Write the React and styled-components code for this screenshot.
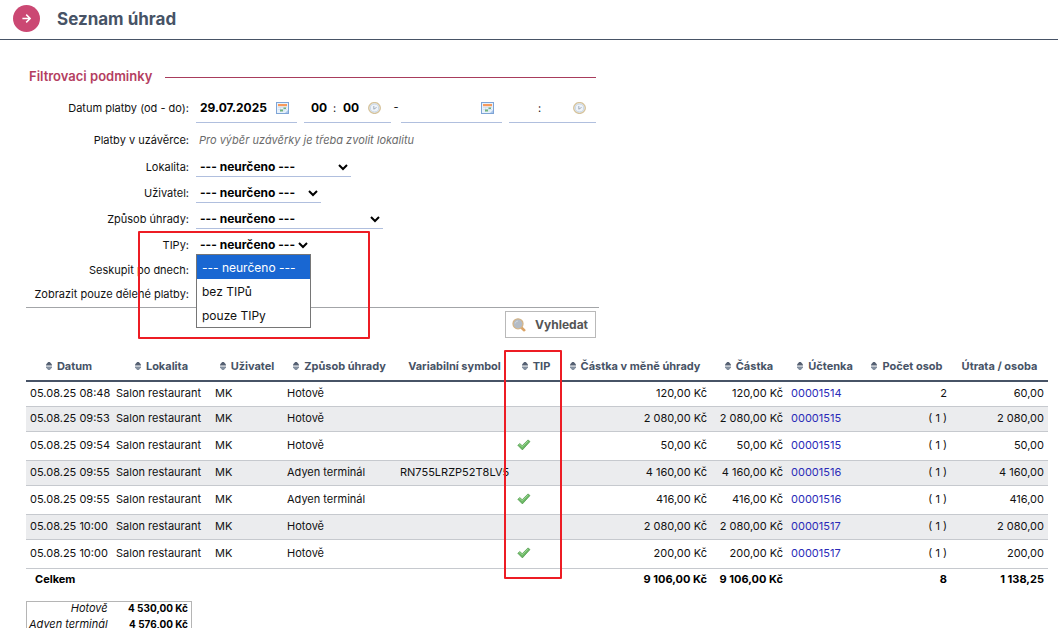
import React from "react";
import styled, { createGlobalStyle, css } from "styled-components";

const GlobalStyle = createGlobalStyle`
  *, *::before, *::after { box-sizing: border-box; }
  html { scrollbar-width: none; }
  body {
    margin: 0;
    background: #fff;
    color: #111;
    font: 400 11px/16px Inter, "Liberation Sans", sans-serif;
  }
  input, select, button { font-family: inherit; }
`;

const Header = styled.header`
  display: flex;
  align-items: center;
  gap: 17px;
  height: 40px;
  padding: 0 13px 2px;
  border-bottom: 1px solid #475366;
`;

const BackButton = styled.button`
  display: grid;
  place-items: center;
  width: 27px;
  height: 27px;
  padding: 0;
  border: 0;
  border-radius: 50%;
  background: #cb4873;
`;

const Title = styled.h1`
  margin: 0;
  color: #475366;
  font-size: 17px;
  line-height: 24px;
  font-weight: 700;
`;

const Main = styled.main`
  padding: 26px 10px 0 26px;
`;

const Filter = styled.form`
  position: relative;
  max-width: 573px;
`;

const FilterTitle = styled.h2`
  display: flex;
  align-items: center;
  gap: 13px;
  height: 20px;
  margin: 0 3px 7px;
  color: #b43e61;
  font-size: 13px;
  line-height: 18px;
  font-weight: 600;
  white-space: nowrap;

  &::after {
    content: "";
    flex: 1;
    height: 1px;
    margin-top: 2px;
    background: #a83c5c;
  }
`;

const Rows = styled.div`
  display: flex;
  flex-direction: column;
  gap: 6px;
  padding-bottom: 4px;
  border-bottom: 1px solid #a3a5a8;
`;

const Row = styled.div`
  display: grid;
  grid-template-columns: 163px 1fr;
  column-gap: 7px;
  align-items: center;
  height: ${(p) => p.$h || 20}px;
`;

const Label = styled.label`
  text-align: right;
  white-space: nowrap;
`;

const Hint = styled.em`
  padding-left: 3px;
  color: #6b6b6b;
`;

const DateRange = styled.div`
  display: flex;
  align-items: stretch;
  gap: 7px;
  height: 30px;
`;

const Dash = styled.span`
  width: 10px;
  margin: 0 -7px;
  line-height: 28px;
  text-align: center;
`;

const Field = styled.div`
  display: flex;
  align-items: center;
  width: ${(p) => p.$w}px;
  padding: 0 ${(p) => p.$end || 8}px 0 4px;
  border-bottom: 1px solid #b0bfde;
`;

const FieldInput = styled.input`
  width: ${(p) => p.$w}px;
  min-width: 0;
  padding: 0;
  border: 0;
  outline: 0;
  background: transparent;
  color: #000;
  font-size: 12px;
  font-weight: 700;
  text-align: ${(p) => (p.$center ? "center" : "left")};
`;

const Colon = styled.span`
  width: 9px;
  text-align: center;
`;

const IconButton = styled.button`
  display: flex;
  margin-left: auto;
  padding: 0;
  border: 0;
  background: none;
`;

const Select = styled.select`
  width: ${(p) => p.$w}px;
  height: 20px;
  padding: 0;
  border: 0;
  border-bottom: 1px solid #b0bfde;
  border-radius: 0;
  outline: 0;
  background: #fff;
  color: #000;
  font-size: 12px;
  font-weight: 700;
`;

const SelectBox = styled.div`
  position: relative;
`;

const Options = styled.ul`
  position: absolute;
  z-index: 2;
  top: 19px;
  left: 0;
  width: 115px;
  margin: 0;
  padding: 0;
  border: 1px solid #767676;
  background: #fff;
  list-style: none;
`;

const Option = styled.li`
  padding: 2px 5px 0;
  font-size: 12px;
  line-height: 22px;
  ${(p) =>
    p.$active &&
    css`
      background: #1967d2;
      color: #fff;
    `}
`;

const Check = styled.input`
  width: 13px;
  height: 13px;
  margin: 0 3px;
`;

const Actions = styled.div`
  display: flex;
  justify-content: flex-end;
  padding: 3px 3px 12px;
`;

const SearchButton = styled.button`
  display: flex;
  align-items: center;
  gap: 9px;
  height: 27px;
  padding: 0 7px 0 6px;
  border: 1px solid #b9b9b9;
  background: #fff;
  color: #555;
  font-size: 12px;
  font-weight: 700;
`;

const Mark = styled.div`
  position: absolute;
  z-index: 3;
  border: 2px solid #ed1c24;
  border-radius: 1px;
  pointer-events: none;
`;

const FilterMark = styled(Mark)`
  top: 165px;
  left: 112px;
  width: 232px;
  height: 108px;
`;

const ColumnMark = styled(Mark)`
  top: 0;
  left: 46.8%;
  width: 58px;
  height: 229px;
`;

const Results = styled.section`
  position: relative;
`;

const Table = styled.table`
  width: 100%;
  table-layout: fixed;
  border-collapse: separate;
  border-spacing: 0;
  white-space: nowrap;
`;

const Th = styled.th`
  height: 32px;
  padding: 2px 0 0;
  border-bottom: 2px solid #475366;
  color: #475366;
  font-weight: 700;
`;

const HeadLabel = styled.span`
  display: flex;
  align-items: center;
  justify-content: center;
  gap: 5px;
`;

const Tr = styled.tr`
  height: ${(p) => (p.$tall ? 29 : 25)}px;
  background: ${(p) => (p.$shade ? "#ebecee" : "#fff")};
`;

const Td = styled.td`
  padding: 0 4px 2px;
  border-bottom: 1px solid #c6c9ce;
  text-align: ${(p) => (p.$right ? "right" : "left")};

  svg { display: block; }
`;

const TotalRow = styled.tr`
  height: 22px;
  color: #000;
`;

const TotalCell = styled.td`
  padding: 0 4px 2px;
  font-weight: 700;
  text-align: ${(p) => (p.$first ? "left" : "right")};
  ${(p) => p.$first && "padding-left: 9px;"}
`;

const Link = styled.a`
  color: #2a2ab8;
  text-decoration: none;
`;

const Summary = styled.table`
  width: 166px;
  margin-top: 10px;
  border: 1px solid #b5b5b5;
  border-collapse: separate;
  border-spacing: 0;
  white-space: nowrap;
`;

const SummaryName = styled.th`
  width: 82px;
  height: 16px;
  padding: 0 2px;
  font-weight: 400;
  font-style: italic;
  line-height: 12px;
  text-align: right;
  vertical-align: top;
`;

const SummaryValue = styled.td`
  padding: 0 3px 0 0;
  color: #000;
  font-size: 10px;
  font-weight: 700;
  line-height: 12px;
  text-align: right;
  vertical-align: top;
`;

const ArrowIcon = () => (
  <svg width="9" height="9" viewBox="0 0 9 9" fill="none" stroke="#fff" strokeWidth="1.5">
    <path d="M.4 4.5h7.6M4.2.6l3.9 3.9-3.9 3.9" />
  </svg>
);

const CalendarIcon = () => (
  <svg width="13" height="12" viewBox="0 0 13 12">
    <rect x=".5" y=".5" width="12" height="11" fill="#e9f2fb" stroke="#7ea4d6" />
    <path d="M2 2h9v2.2H2z" fill="#f79a5c" />
    <path d="M2 5.5h9M2 7.5h9M4.5 5v5M8 5v5" stroke="#cddbee" strokeWidth=".7" />
    <path d="M7.5 5.5H10V7H7.5zM4 7.5h3v2H4z" fill="#6fb27a" />
    <path d="M12 11v-3l-3 3z" fill="#a9c6eb" />
  </svg>
);

const ClockIcon = () => (
  <svg width="13" height="12" viewBox="0 0 13 12" fill="none">
    <ellipse cx="6.5" cy="6" rx="5.8" ry="5.4" fill="#eef3f9" stroke="#d6c39b" strokeWidth="1.4" />
    <ellipse cx="6.5" cy="6" rx="4.2" ry="3.9" stroke="#c3d2e4" strokeWidth=".9" />
    <path d="M5.8 4v3.2L8.6 5.4" stroke="#929dac" strokeWidth=".8" />
  </svg>
);

const LensIcon = () => (
  <svg width="14" height="14" viewBox="0 0 14 14">
    <path d="M8.8 9l3.4 3.2" stroke="#dba468" strokeWidth="2.6" strokeLinecap="round" />
    <circle cx="6" cy="5.8" r="5" fill="#b4bcc6" stroke="#d3b488" strokeWidth="1.3" />
    <path d="M3.2 5.5A3 3 0 0 1 6 3" fill="none" stroke="#ccd5de" />
  </svg>
);

const SortIcon = () => (
  <svg width="6" height="8" viewBox="0 0 6 8">
    <path d="M2.2 0h1.6L6 2.6v1H0v-1z" fill="#556072" />
    <path d="M2.2 8h1.6L6 5.4v-1H0v1z" fill="#8490a0" />
  </svg>
);

const TickIcon = () => (
  <svg width="14" height="12" viewBox="0 0 14 12" role="img" aria-label="TIP">
    <path d="M.8 6.3l2-1.7 2.4 2.1L11 .9l2 1.7-7.6 8.3z" fill="#6cb965" stroke="#4d984a" strokeWidth=".7" />
    <path d="M2 6.1l.8-.6 2.4 2.2L11 2.1" fill="none" stroke="#a5dc9c" strokeWidth=".8" />
  </svg>
);

const NONE = "--- neurčeno ---";

const columns = [
  { label: "Datum", width: 86, sort: true },
  { label: "Lokalita", width: 99, sort: true },
  { label: "Uživatel", width: 72, sort: true },
  { label: "Způsob úhrady", width: 113, sort: true },
  { label: "Variabilní symbol", width: 117 },
  { label: "TIP", width: 46, sort: true },
  { label: "Částka v měně úhrady", width: 152, sort: true },
  { label: "Částka", width: 76, sort: true },
  { label: "Účtenka", width: 76, sort: true },
  { label: "Počet osob", width: 88, sort: true },
  { label: "Útrata / osoba", width: 97 },
];

const payments = [
  { time: "08:48", method: "Hotově", amount: "120,00", bill: "00001514", people: "2", each: "60,00" },
  { time: "09:53", method: "Hotově", amount: "2 080,00", bill: "00001515", people: "( 1 )", each: "2 080,00" },
  { time: "09:54", method: "Hotově", tip: true, amount: "50,00", bill: "00001515", people: "( 1 )", each: "50,00" },
  { time: "09:55", method: "Adyen terminál", symbol: "RN755LRZP52T8LV5", amount: "4 160,00", bill: "00001516", people: "( 1 )", each: "4 160,00" },
  { time: "09:55", method: "Adyen terminál", tip: true, amount: "416,00", bill: "00001516", people: "( 1 )", each: "416,00" },
  { time: "10:00", method: "Hotově", amount: "2 080,00", bill: "00001517", people: "( 1 )", each: "2 080,00" },
  { time: "10:00", method: "Hotově", tip: true, amount: "200,00", bill: "00001517", people: "( 1 )", each: "200,00" },
];

function DateField({ id, label, value }) {
  return (
    <Field $w={101}>
      <FieldInput id={id} aria-label={label} $w={72} defaultValue={value} />
      <IconButton type="button" aria-label="Kalendář"><CalendarIcon /></IconButton>
    </Field>
  );
}

function TimeField({ label, value }) {
  return (
    <Field $w={87} $end={10}>
      <FieldInput $w={22} $center aria-label={`${label} – hodiny`} defaultValue={value} />
      <Colon>:</Colon>
      <FieldInput $w={24} $center aria-label={`${label} – minuty`} defaultValue={value} />
      <IconButton type="button" aria-label="Čas"><ClockIcon /></IconButton>
    </Field>
  );
}

function SelectRow({ id, label, width }) {
  return (
    <Row>
      <Label htmlFor={id}>{label}</Label>
      <Select id={id} $w={width}><option>{NONE}</option></Select>
    </Row>
  );
}

export default function App() {
  return (
    <>
      <GlobalStyle />
      <Header>
        <BackButton type="button" aria-label="Menu"><ArrowIcon /></BackButton>
        <Title>Seznam úhrad</Title>
      </Header>
      <Main>
        <Filter onSubmit={(e) => e.preventDefault()}>
          <FilterTitle>Filtrovaci podminky</FilterTitle>
          <Rows>
            <Row $h={30}>
              <Label htmlFor="from">Datum platby (od - do):</Label>
              <DateRange>
                <DateField id="from" label="Datum od" value="29.07.2025" />
                <TimeField label="Čas od" value="00" />
                <Dash>-</Dash>
                <DateField id="to" label="Datum do" value="" />
                <TimeField label="Čas do" value="" />
              </DateRange>
            </Row>
            <Row $h={22}>
              <Label as="span">Platby v uzávěrce:</Label>
              <Hint>Pro výběr uzávěrky je třeba zvolit lokalitu</Hint>
            </Row>
            <SelectRow id="place" label="Lokalita:" width={155} />
            <SelectRow id="user" label="Uživatel:" width={125} />
            <SelectRow id="method" label="Způsob úhrady:" width={187} />
            <Row>
              <Label htmlFor="tips">TIPy:</Label>
              <SelectBox>
                <Select id="tips" $w={115}>
                  <option>{NONE}</option>
                  <option>bez TIPů</option>
                  <option>pouze TIPy</option>
                </Select>
                <Options role="listbox" aria-label="TIPy">
                  <Option role="option" aria-selected="true" $active>{NONE}</Option>
                  <Option role="option" aria-selected="false">bez TIPů</Option>
                  <Option role="option" aria-selected="false">pouze TIPy</Option>
                </Options>
              </SelectBox>
            </Row>
            <Row $h={18}>
              <Label htmlFor="group">Seskupit po dnech:</Label>
              <Check id="group" type="checkbox" />
            </Row>
            <Row $h={18}>
              <Label htmlFor="split">Zobrazit pouze dělené platby:</Label>
              <Check id="split" type="checkbox" />
            </Row>
          </Rows>
          <Actions>
            <SearchButton type="submit"><LensIcon />Vyhledat</SearchButton>
          </Actions>
          <FilterMark />
        </Filter>

        <Results>
          <Table>
            <colgroup>
              {columns.map((c) => <col key={c.label} width={c.width} />)}
            </colgroup>
            <thead>
              <tr>
                {columns.map((c) => (
                  <Th key={c.label} scope="col">
                    <HeadLabel>{c.sort && <SortIcon />}{c.label}</HeadLabel>
                  </Th>
                ))}
              </tr>
            </thead>
            <tbody>
              {payments.map((p, i) => (
                <Tr key={i} $shade={i % 2 === 1} $tall={p.tip}>
                  <Td>05.08.25 {p.time}</Td>
                  <Td>Salon restaurant</Td>
                  <Td>MK</Td>
                  <Td>{p.method}</Td>
                  <Td>{p.symbol}</Td>
                  <Td>{p.tip && <TickIcon />}</Td>
                  <Td $right>{p.amount} Kč</Td>
                  <Td $right>{p.amount} Kč</Td>
                  <Td><Link href="#">{p.bill}</Link></Td>
                  <Td $right>{p.people}</Td>
                  <Td $right>{p.each}</Td>
                </Tr>
              ))}
            </tbody>
            <tfoot>
              <TotalRow>
                <TotalCell $first colSpan={6}>Celkem</TotalCell>
                <TotalCell>9 106,00 Kč</TotalCell>
                <TotalCell>9 106,00 Kč</TotalCell>
                <TotalCell />
                <TotalCell>8</TotalCell>
                <TotalCell>1 138,25</TotalCell>
              </TotalRow>
            </tfoot>
          </Table>
          <ColumnMark />
        </Results>

        <Summary>
          <tbody>
            <tr>
              <SummaryName scope="row">Hotově</SummaryName>
              <SummaryValue>4 530,00 Kč</SummaryValue>
            </tr>
            <tr>
              <SummaryName scope="row">Adyen terminál</SummaryName>
              <SummaryValue>4 576,00 Kč</SummaryValue>
            </tr>
          </tbody>
        </Summary>
      </Main>
    </>
  );
}
